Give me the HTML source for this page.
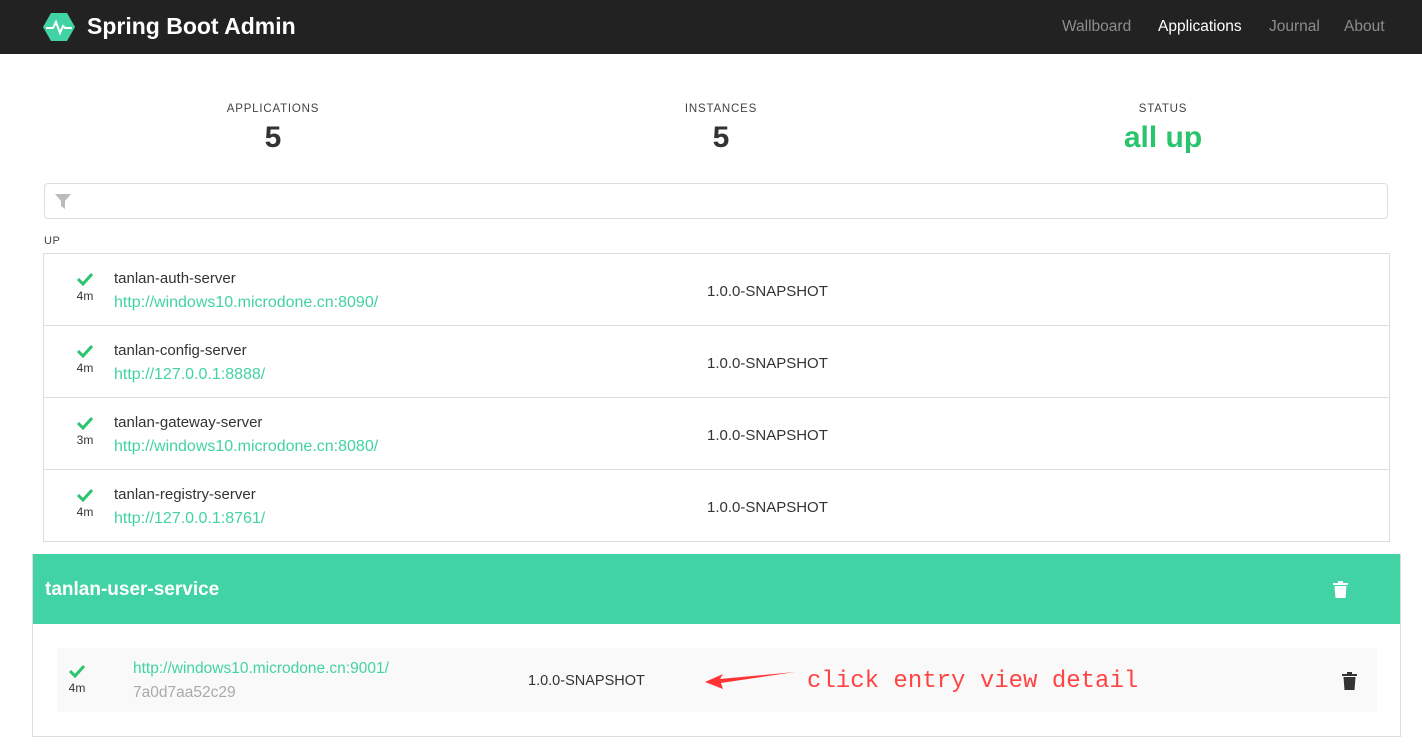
<!DOCTYPE html>
<html><head><meta charset="utf-8"><style>
body{margin:0;width:1422px;height:755px;overflow:hidden;background:#fff;font-family:"Liberation Sans",sans-serif;color:#333}
.nav{height:54px;background:#222;position:relative}
.brand{position:absolute;left:87px;top:13px;color:#fff;font-size:23px;font-weight:bold}
.links{position:absolute;top:18px;font-size:15.5px;color:#8c8c8c}
.links span{position:absolute;white-space:nowrap}
.stat{position:absolute;text-align:center;width:300px}
.stat .l{font-size:11.5px;letter-spacing:.8px;color:#444}
.stat .v{font-size:30px;font-weight:bold;margin-top:6px;color:#333}
.filter{position:absolute;left:44px;top:183px;width:1342px;height:34px;border:1px solid #ddd;border-radius:4px}
.list{position:absolute;left:43px;top:253px;width:1345px;border:1px solid #ddd}
.row{height:71px;border-top:1px solid #ddd;position:relative}
.row:first-child{border-top:none}
.ck{position:absolute;left:31px;top:18px;width:20px;text-align:center;font-size:12px}
.name{position:absolute;left:70px;top:16px;font-size:15px}
.url{position:absolute;left:70px;top:40px;font-size:16px;color:#42d3a5}
.ver{position:absolute;left:663px;top:29px;font-size:15px}
.u{position:absolute;left:32px;top:554px;width:1367px;height:182px;border:1px solid #ddd;border-top:none}
.uh{height:70px;background:#42d3a5;color:#fff;font-weight:bold;font-size:19px;line-height:72px;padding-left:12px;position:relative}
.inst{position:absolute;left:24px;top:94px;width:1320px;height:64px;background:#f9f9f9}
</style></head><body>
<div class="nav">
<svg style="position:absolute;left:43px;top:13px" width="32" height="28" viewBox="0 0 32 28"><polygon points="8,0 24,0 32,14 24,28 8,28 0,14" fill="#42d3a5"/><polyline points="3,15 10,15 13,9 17,20 20,13 22,15 29,15" fill="none" stroke="#fff" stroke-width="2"/></svg>
<div class="brand">Spring Boot Admin</div>
<div class="links"><span style="left:1062px">Wallboard</span><span style="left:1158px;color:#fff">Applications</span><span style="left:1269px">Journal</span><span style="left:1344px">About</span></div>
</div>
<div class="stat" style="left:123px;top:103px"><div class="l">APPLICATIONS</div><div class="v">5</div></div>
<div class="stat" style="left:571px;top:103px"><div class="l">INSTANCES</div><div class="v">5</div></div>
<div class="stat" style="left:1013px;top:103px"><div class="l">STATUS</div><div class="v" style="color:#2bc46e">all up</div></div>
<div class="filter"><svg style="position:absolute;left:10px;top:10px" width="16" height="15" viewBox="0 0 16 15"><polygon points="0,0 16,0 10,7 10,15 6,12 6,7" fill="#bbb"/></svg></div>
<div style="position:absolute;left:44px;top:235px;font-size:11px;letter-spacing:.6px;color:#444">UP</div>
<div class="list">
<div class="row"><div class="ck"><svg width="18" height="14" viewBox="0 0 18 14"><polyline points="2,7 7,12 16,2" fill="none" stroke="#2bc46e" stroke-width="3"/></svg><br>4m</div><div class="name">tanlan-auth-server</div><div class="url">http://windows10.microdone.cn:8090/</div><div class="ver">1.0.0-SNAPSHOT</div></div>
<div class="row"><div class="ck"><svg width="18" height="14" viewBox="0 0 18 14"><polyline points="2,7 7,12 16,2" fill="none" stroke="#2bc46e" stroke-width="3"/></svg><br>4m</div><div class="name">tanlan-config-server</div><div class="url">http://127.0.0.1:8888/</div><div class="ver">1.0.0-SNAPSHOT</div></div>
<div class="row"><div class="ck"><svg width="18" height="14" viewBox="0 0 18 14"><polyline points="2,7 7,12 16,2" fill="none" stroke="#2bc46e" stroke-width="3"/></svg><br>3m</div><div class="name">tanlan-gateway-server</div><div class="url">http://windows10.microdone.cn:8080/</div><div class="ver">1.0.0-SNAPSHOT</div></div>
<div class="row"><div class="ck"><svg width="18" height="14" viewBox="0 0 18 14"><polyline points="2,7 7,12 16,2" fill="none" stroke="#2bc46e" stroke-width="3"/></svg><br>4m</div><div class="name">tanlan-registry-server</div><div class="url">http://127.0.0.1:8761/</div><div class="ver">1.0.0-SNAPSHOT</div></div>
</div>
<div class="u">
<div class="uh">tanlan-user-service<svg style="position:absolute;left:1300px;top:27px" width="15" height="17" viewBox="0 0 15 17"><rect x="0" y="2" width="15" height="2" fill="#fff"/><rect x="5" y="0" width="5" height="2" fill="#fff"/><path d="M1.5 5 H13.5 L12.5 17 H2.5 Z" fill="#fff"/></svg></div>
<div class="inst">
<div class="ck" style="left:10px;top:16px"><svg width="18" height="14" viewBox="0 0 18 14"><polyline points="2,7 7,12 16,2" fill="none" stroke="#2bc46e" stroke-width="3"/></svg><br>4m</div>
<div class="url" style="left:76px;top:12px;font-size:15.5px">http://windows10.microdone.cn:9001/</div>
<div style="position:absolute;left:76px;top:36px;font-size:15.5px;color:#aaa">7a0d7aa52c29</div>
<div style="position:absolute;left:471px;top:25px;font-size:14.5px">1.0.0-SNAPSHOT</div>
<svg style="position:absolute;left:648px;top:22px" width="95" height="20" viewBox="0 0 95 20"><polygon points="0,12 18,4 15,9 90,2 16,13 18,19" fill="#f33"/></svg>
<div style="position:absolute;left:750px;top:20px;font-family:'Liberation Mono',monospace;font-size:24px;color:#f44">click entry view detail</div>
<svg style="position:absolute;left:1285px;top:24px" width="15" height="18" viewBox="0 0 15 18"><rect x="0" y="2" width="15" height="2" fill="#333"/><rect x="5" y="0" width="5" height="2" fill="#333"/><path d="M1.5 5 H13.5 L12.5 18 H2.5 Z" fill="#333"/></svg>
</div>
</div>
</body></html>
